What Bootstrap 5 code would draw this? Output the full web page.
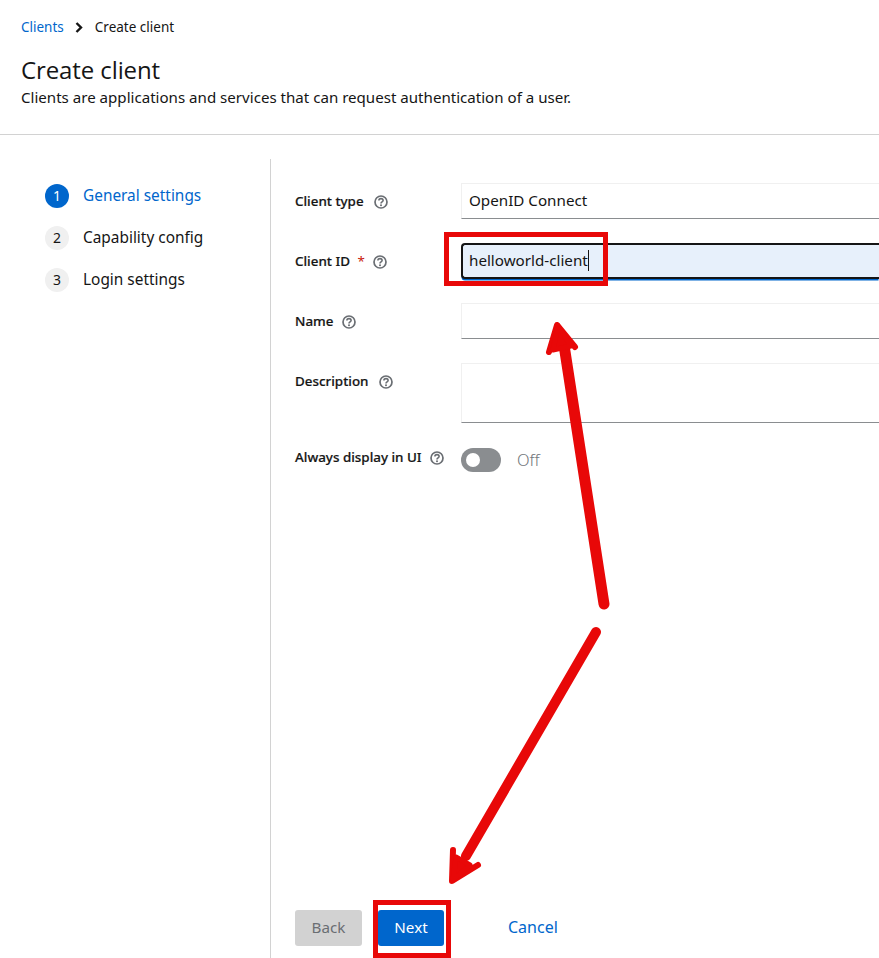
<!DOCTYPE html>
<html lang="en">
<head>
    <meta charset="UTF-8">
    <title>Create client</title>
    <link href="https://cdn.jsdelivr.net/npm/bootstrap@5.3.0/dist/css/bootstrap.min.css" rel="stylesheet">
    <style>
        html, body {
            height: 958px;
            overflow: hidden;
        }

        body {
            position: relative;
            font-family: "Noto Sans", "Liberation Sans", sans-serif;
            font-size: 15px;
            color: #151515;
            background-color: #fff;
        }

        a {
            color: #06c;
            text-decoration: none;
        }

        .page-head {
            height: 135px;
            padding: 17px 21px 0;
            border-bottom: 1px solid #d2d2d2;
        }

        .breadcrumb {
            font-size: 13.5px;
            line-height: 20px;
            margin-bottom: 18px;
        }

        .breadcrumb-item + .breadcrumb-item {
            padding-left: 0;
        }

        .breadcrumb-item + .breadcrumb-item::before {
            display: none;
        }

        .crumb-sep {
            width: 8px;
            height: 11px;
            margin: 0 12px 0 11px;
        }

        .page-title {
            font-family: "Open Sans", sans-serif;
            font-size: 24px;
            line-height: 30px;
            font-weight: 500;
            letter-spacing: -0.1px;
            margin: 0;
        }

        .page-sub {
            font-size: 15.1px;
            line-height: 24px;
            margin: 0;
        }

        .wizard {
            height: 799px;
            margin-top: 24px;
        }

        .wizard-steps {
            width: 271px;
            flex: none;
            padding: 25px 0 0 45px;
            border-right: 1px solid #d2d2d2;
        }

        .step-row {
            height: 24px;
            margin-bottom: 18px;
            font-size: 15.4px;
            line-height: 22px;
        }

        .step-num {
            width: 24px;
            height: 24px;
            flex: none;
            margin-right: 14px;
            border-radius: 50%;
            background-color: #f0f0f0;
            font-size: 14px;
            text-align: center;
            line-height: 24px;
        }

        .step-row.is-current {
            color: #06c;
        }

        .step-row.is-current .step-num {
            background-color: #06c;
            color: #fff;
        }

        .wizard-main {
            flex: 1;
            min-width: 0;
            padding: 24px 0 12px 24px;
        }

        .field-row {
            margin-bottom: 24px;
        }

        .field-label {
            width: 166px;
            flex: none;
            font-size: 13.4px;
            font-weight: 500;
            -webkit-text-stroke: 0.2px #151515;
            line-height: 20px;
            padding-top: 8px;
        }

        .field-label .req {
            color: #c9190b;
            -webkit-text-stroke: 0;
            margin-left: 4px;
            font-weight: 400;
        }

        .help-ico {
            width: 14px;
            height: 14px;
            margin-left: 5px;
            vertical-align: -3px;
        }

        .help-wide {
            margin-left: 7px;
        }

        .field-box {
            position: relative;
            flex: 1;
            min-width: 0;
        }

        .form-control.kc-input {
            height: 36px;
            padding: 4px 7px 6px;
            font-size: 15.2px;
            color: #151515;
            border: 1px solid #f0f0f0;
            border-right: 0;
            border-bottom-color: #8a8d90;
            border-radius: 0;
            box-shadow: none;
        }

        textarea.form-control.kc-input {
            height: 60px;
            resize: none;
        }

        .form-control.kc-input.is-filled {
            background-color: #e7f0fb;
            border: 2px solid #151515;
            border-right: 0;
            border-radius: 4px 0 0 4px;
            padding: 3px 6px 5px;
            box-shadow: 0 2px 0 -0.5px #06c;
        }

        .input-caret {
            position: absolute;
            left: 127px;
            top: 7px;
            width: 1px;
            height: 21px;
            background-color: #151515;
        }

        .toggle-row {
            height: 24px;
            margin-top: 25px;
        }

        .toggle-row .field-label {
            padding-top: 0;
            padding-bottom: 6px;
        }

        .toggle-pill {
            position: relative;
            width: 40px;
            height: 24px;
            border-radius: 12px;
            background-color: #8a8d90;
        }

        .toggle-pill::before {
            content: "";
            position: absolute;
            left: 5px;
            top: 5px;
            width: 14px;
            height: 14px;
            border-radius: 50%;
            background-color: #fff;
        }

        .toggle-text {
            margin-left: 16px;
            font-size: 16.4px;
            font-weight: 300;
            color: #72767b;
        }

        .btn.kc-btn {
            height: 36px;
            padding: 0 0 2px;
            font-size: 15.2px;
            border-radius: 3px;
            border: 0;
        }

        .btn.kc-next {
            width: 66px;
            background-color: #06c;
            color: #fff;
            margin-left: 16px;
        }

        .btn.kc-back {
            width: 67px;
            background-color: #d2d2d2;
            color: #6a6e73;
            opacity: 1;
        }

        .btn.kc-cancel {
            color: #06c;
            font-size: 16px;
            margin-left: 64px;
        }

        .notes-layer {
            position: absolute;
            left: 0;
            top: 0;
            pointer-events: none;
        }
    </style>
</head>
<body>
    <div class="page-head">
        <ol class="breadcrumb">
            <li class="breadcrumb-item"><a href="#">Clients</a></li>
            <li class="breadcrumb-item active text-reset d-flex align-items-center">
                <svg class="crumb-sep" viewBox="0 0 8 11"><path d="M1.5 1 6 5.5 1.5 10" fill="none" stroke="#151515" stroke-width="2.4"/></svg>
                Create client
            </li>
        </ol>
        <h1 class="page-title">Create client</h1>
        <p class="page-sub">Clients are applications and services that can request authentication of a user.</p>
    </div>

    <div class="wizard d-flex">
        <div class="wizard-steps">
            <div class="step-row is-current d-flex align-items-center"><span class="step-num">1</span>General settings</div>
            <div class="step-row d-flex align-items-center"><span class="step-num">2</span>Capability config</div>
            <div class="step-row d-flex align-items-center"><span class="step-num">3</span>Login settings</div>
        </div>

        <div class="wizard-main d-flex flex-column">
            <div class="flex-grow-1">
                <div class="field-row d-flex">
                    <div class="field-label">Client type <svg class="help-ico help-wide" viewBox="0 0 14 14"><use href="#help"/></svg></div>
                    <div class="field-box"><input class="form-control kc-input" value="OpenID Connect"></div>
                </div>
                <div class="field-row d-flex">
                    <div class="field-label">Client ID <span class="req">*</span> <svg class="help-ico" viewBox="0 0 14 14"><use href="#help"/></svg></div>
                    <div class="field-box">
                        <input class="form-control kc-input is-filled" value="helloworld-client">
                        <span class="input-caret"></span>
                    </div>
                </div>
                <div class="field-row d-flex">
                    <div class="field-label">Name <svg class="help-ico" viewBox="0 0 14 14"><use href="#help"/></svg></div>
                    <div class="field-box"><input class="form-control kc-input"></div>
                </div>
                <div class="field-row d-flex">
                    <div class="field-label">Description <svg class="help-ico help-wide" viewBox="0 0 14 14"><use href="#help"/></svg></div>
                    <div class="field-box"><textarea class="form-control kc-input"></textarea></div>
                </div>
                <div class="toggle-row d-flex align-items-center">
                    <div class="field-label">Always display in UI <svg class="help-ico" viewBox="0 0 14 14"><use href="#help"/></svg></div>
                    <span class="toggle-pill"></span>
                    <span class="toggle-text">Off</span>
                </div>
            </div>
            <div class="d-flex">
                <button class="btn kc-btn kc-back" disabled>Back</button>
                <button class="btn kc-btn kc-next">Next</button>
                <button class="btn kc-btn kc-cancel">Cancel</button>
            </div>
        </div>
    </div>

    <!-- red annotations drawn on top of the screenshot -->
    <svg class="notes-layer" width="879" height="958" viewBox="0 0 879 958">
        <defs>
            <g id="help">
                <circle cx="7" cy="7" r="6" fill="none" stroke="#6a6e73" stroke-width="1.7"/>
                <path d="M4.9 5.5C4.9 4.2 5.9 3.6 7 3.6s2.1 .7 2.1 1.8c0 1.5-2.1 1.5-2.1 3" fill="none" stroke="#6a6e73" stroke-width="1.6"/>
                <circle cx="7" cy="10.3" r="1" fill="#6a6e73"/>
            </g>
        </defs>
        <g fill="none" stroke="#e80808">
            <rect x="446.5" y="234.5" width="159" height="49" stroke-width="5"/>
            <rect x="375.5" y="902.5" width="73" height="53" stroke-width="5"/>
        </g>
        <g fill="none" stroke="#e80808" stroke-linecap="round" stroke-linejoin="round">
            <path d="M604 604 564 345" stroke-width="11"/>
            <path d="M549 352 557 325 575 347" stroke-width="6"/>
            <path d="M558 326 553 350 571 346Z" fill="#e80808" stroke-width="5"/>
            <path d="M596 632 466 856" stroke-width="10"/>
            <path d="M453 850 452 881 478 865" stroke-width="6"/>
            <path d="M453 880 456 857 470 865Z" fill="#e80808" stroke-width="5"/>
        </g>
    </svg>
    <script src="https://cdn.jsdelivr.net/npm/bootstrap@5.3.0/dist/js/bootstrap.bundle.min.js"></script>
</body>
</html>
